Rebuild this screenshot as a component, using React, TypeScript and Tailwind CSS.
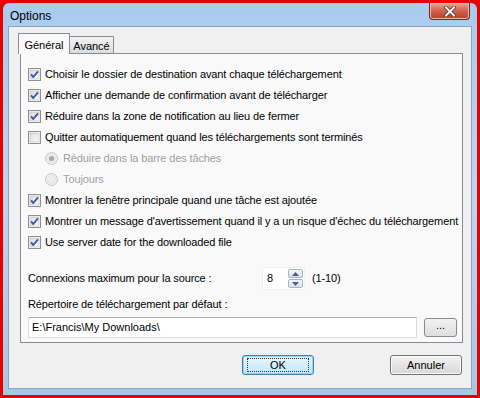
import React from 'react';

const font = { fontFamily: '"Liberation Sans", Arial, sans-serif' };

function CheckBox({ checked }: { checked: boolean }) {
  return (
    <svg width="13" height="13" viewBox="0 0 13 13" className="shrink-0">
      <defs>
        <linearGradient id="cbg" x1="0" y1="0" x2="1" y2="1">
          <stop offset="0" stopColor="#dcdcdc" />
          <stop offset="1" stopColor="#fbfbfb" />
        </linearGradient>
      </defs>
      <rect x="0.5" y="0.5" width="12" height="12" fill="#fff" stroke="#8e8f8f" />
      <rect x="2" y="2" width="9" height="9" fill="url(#cbg)" stroke="#b4b4b4" strokeWidth="0.6" />
      {checked && (
        <path d="M3 6.4 L5.3 9 L10 3.4" fill="none" stroke="#3a5aa8" strokeWidth="1.9" strokeLinejoin="round" />
      )}
    </svg>
  );
}

function Radio({ checked }: { checked: boolean }) {
  return (
    <svg width="13" height="13" viewBox="0 0 13 13" className="shrink-0">
      <circle cx="6.5" cy="6.5" r="6" fill="#f4f4f4" stroke="#c2c2c2" />
      <circle cx="6.5" cy="6.5" r="4.3" fill="#ececec" stroke="#dadada" strokeWidth="0.6" />
      {checked && <circle cx="6.5" cy="6.5" r="2.6" fill="#a9a9a9" />}
    </svg>
  );
}

function CheckRow({ label, checked }: { label: string; checked: boolean }) {
  return (
    <div className="flex h-[21px] items-center gap-[4px] whitespace-nowrap text-[11px] tracking-[-0.12px] text-black">
      <CheckBox checked={checked} />
      <span>{label}</span>
    </div>
  );
}

function RadioRow({ label, checked }: { label: string; checked: boolean }) {
  return (
    <div className="flex h-[21px] items-center gap-[5px] whitespace-nowrap pl-[17px] text-[11px] tracking-[-0.12px] text-[#a0a0a0]">
      <Radio checked={checked} />
      <span>{label}</span>
    </div>
  );
}

function Button({ children, focused }: { children: React.ReactNode; focused?: boolean }) {
  return (
    <div
      className={
        'flex h-[20px] w-[72px] items-center justify-center rounded-[3px] border text-[11px] text-black ' +
        (focused
          ? 'border-[#3c7fb1] bg-gradient-to-b from-[#eaf6fd] to-[#bee6fd] shadow-[inset_0_0_0_1px_#98d5f5]'
          : 'border-[#707070] bg-gradient-to-b from-[#f2f2f2] to-[#d7d7d7] shadow-[inset_0_0_0_1px_#fcfcfc]')
      }
    >
      {focused ? (
        <span className="flex h-[14px] w-[62px] items-center justify-center border border-dotted border-[#333]">{children}</span>
      ) : (
        children
      )}
    </div>
  );
}

export default function App() {
  return (
    <div className="h-[398px] w-[480px] overflow-hidden border-[3px] border-[#e60000] bg-[#e60000]" style={font}>
      {/* window frame */}
      <div className="flex h-full flex-col rounded-t-[6px] bg-gradient-to-b from-[#a9cbee] via-[#bcd6f0] to-[#a7c7e6] px-[5px] pb-[6px]">
        {/* title bar */}
        <div className="flex h-[23px] shrink-0 items-start justify-between">
          <span className="pl-[2px] pt-[4px] text-[12px] text-black">Options</span>
          <div className="mr-[2px] flex h-[17px] w-[41px] items-center justify-center rounded-b-[4px] border border-t-0 border-[#6d2a22] bg-gradient-to-b from-[#e8a595] via-[#d0604a] to-[#c33a22] shadow-[inset_0_0_0_1px_#f0b8aa]">
            <svg width="14" height="11" viewBox="0 0 14 11">
              <path d="M3 1.5 L11 9.5 M11 1.5 L3 9.5" stroke="#3a2a28" strokeWidth="3.4" strokeLinecap="square" />
              <path d="M3 1.5 L11 9.5 M11 1.5 L3 9.5" stroke="#ffffff" strokeWidth="2" strokeLinecap="square" />
            </svg>
          </div>
        </div>

        {/* client area */}
        <div className="flex flex-1 flex-col border border-[#8ca2bd] bg-[#f0f0f0]">
          <div className="flex flex-col pl-[9px] pr-[8px] pt-[6px]">
            {/* tabs */}
            <div className="relative z-10 flex h-[21px] items-end">
              <div className="flex h-[21px] w-[52px] items-start justify-center border border-b-0 border-[#898c95] bg-[#f9f9f9] pt-[3px] text-[11px] text-black">
                Général
              </div>
              <div className="mb-[1px] flex h-[17px] w-[44px] items-start justify-center border border-b-0 border-l-0 border-[#898c95] bg-gradient-to-b from-[#f2f2f2] to-[#dcdcdc] pt-[1px] text-[11px] text-black">
                Avancé
              </div>
            </div>
            {/* panel */}
            <div className="-mt-px ml-[2px] flex h-[290px] flex-col border border-[#898c95] bg-[#f9f9f9] pl-[7px] pr-[4px] pt-[10px]">
              <CheckRow checked label="Choisir le dossier de destination avant chaque téléchargement" />
              <CheckRow checked label="Afficher une demande de confirmation avant de télécharger" />
              <CheckRow checked label="Réduire dans la zone de notification au lieu de fermer" />
              <CheckRow checked={false} label="Quitter automatiquement quand les téléchargements sont terminés" />
              <RadioRow checked label="Réduire dans la barre des tâches" />
              <RadioRow checked={false} label="Toujours" />
              <CheckRow checked label="Montrer la fenêtre principale quand une tâche est ajoutée" />
              <CheckRow checked label="Montrer un message d'avertissement quand il y a un risque d'échec du téléchargement" />
              <CheckRow checked label="Use server date for the downloaded file" />

              <div className="mt-[14px] flex h-[23px] items-center text-[11px] tracking-[-0.12px] text-black">
                <span className="w-[234px]">Connexions maximum pour la source :</span>
                <div className="flex h-[23px] w-[43px] items-stretch border border-[#f0f0f0] bg-white">
                  <span className="flex flex-1 items-center pl-[4px]">8</span>
                  <div className="my-[1px] mr-[1px] flex w-[15px] flex-col gap-[1px]">
                    <div className="flex flex-1 items-center justify-center rounded-[2px] border border-[#a9b4c3] bg-gradient-to-b from-[#f5f7fa] to-[#dbe2ea]">
                      <svg width="7" height="4" viewBox="0 0 7 4"><path d="M0 4 L3.5 0 L7 4 Z" fill="#4c607a" /></svg>
                    </div>
                    <div className="flex flex-1 items-center justify-center rounded-[2px] border border-[#a9b4c3] bg-gradient-to-b from-[#f5f7fa] to-[#dbe2ea]">
                      <svg width="7" height="4" viewBox="0 0 7 4"><path d="M0 0 L3.5 4 L7 0 Z" fill="#4c607a" /></svg>
                    </div>
                  </div>
                </div>
                <span className="ml-[7px]">(1-10)</span>
              </div>

              <div className="mt-[7px] text-[11px] leading-[14px] tracking-[-0.12px] text-black">Répertoire de téléchargement par défaut :</div>
              <div className="mt-[6px] flex items-center">
                <div className="flex h-[21px] w-[389px] items-center border border-[#dcdcdc] border-t-[#abadb3] bg-white pl-[3px] text-[11px] text-black">
                  E:\Francis\My Downloads\
                </div>
                <div className="ml-[7px] flex h-[19px] w-[33px] items-center justify-center rounded-[3px] border border-[#8a8a8a] bg-gradient-to-b from-[#f2f2f2] to-[#dedede] pb-[4px] text-[11px] text-black">
                  ...
                </div>
              </div>
            </div>
          </div>

          {/* buttons */}
          <div className="mt-[12px] flex justify-end gap-[76px] pr-[9px]">
            <Button focused>OK</Button>
            <Button>Annuler</Button>
          </div>
        </div>
      </div>
    </div>
  );
}
